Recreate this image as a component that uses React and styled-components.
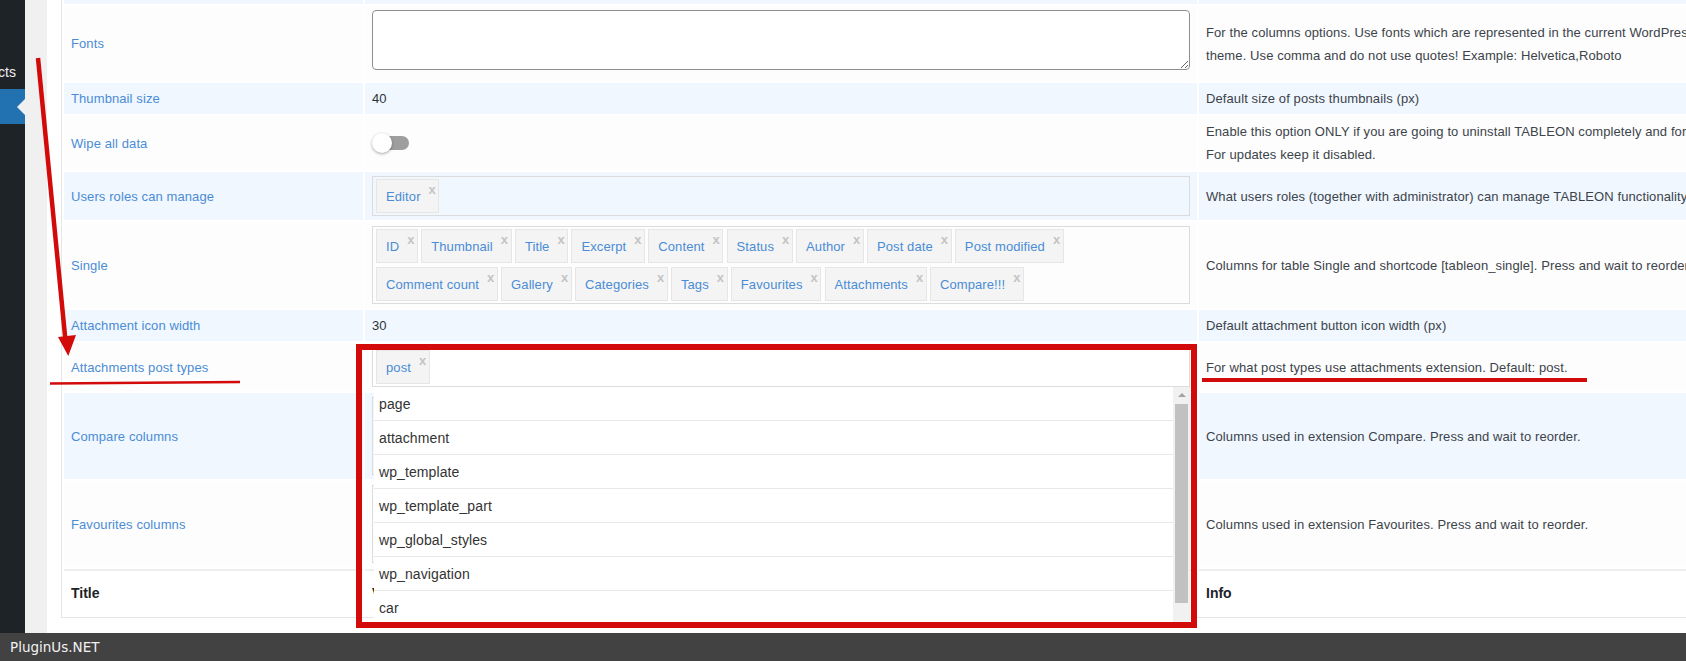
import React from 'react';
import styled, { createGlobalStyle } from 'styled-components';

const GlobalStyle = createGlobalStyle`
  html, body { margin: 0; padding: 0; background: #fff; overflow: hidden; }
  body { font-family: "Liberation Sans", Arial, Helvetica, sans-serif; }
  * { box-sizing: border-box; }
`;

const Page = styled.div`
  position: relative;
  width: 1686px;
  height: 661px;
  display: flex;
  flex-direction: column;
  overflow: hidden;
`;

const Workspace = styled.div`
  display: flex;
  flex: 1;
  min-height: 0;
`;

const AdminMenu = styled.nav`
  width: 25px;
  flex: none;
  background: #1d2327;
  display: flex;
  flex-direction: column;
  padding-top: 55px;
  overflow: hidden;
`;

const MenuItem = styled.div`
  position: relative;
  height: ${p => (p.$current ? 35 : 34)}px;
  flex: none;
  display: flex;
  align-items: center;
  justify-content: flex-end;
  padding-right: 9px;
  white-space: nowrap;
  font-size: 14px;
  color: #f0f0f1;
  background: ${p => (p.$current ? '#2271b1' : 'transparent')};
  &::after {
    content: '';
    display: ${p => (p.$current ? 'block' : 'none')};
    position: absolute;
    right: 0;
    top: 50%;
    margin-top: -8px;
    border: 8px solid transparent;
    border-right-color: #f0f0f1;
    border-left-width: 0;
  }
`;

const Gutter = styled.div`
  width: 22px;
  flex: none;
  background: #f0f0f1;
`;

const Content = styled.main`
  flex: 1;
  min-width: 0;
  background: #fff;
  padding-left: 14px;
  overflow: hidden;
`;

const SettingsTable = styled.table`
  table-layout: fixed;
  width: 1677px;
  border-collapse: separate;
  border-spacing: 2px;
  border: 1px solid #e6e6e6;
  border-top: none;
  margin-top: -2px;
`;

const Row = styled.tr`
  background: ${p => (p.$alt ? '#f0f7ff' : '#fdfdfd')};
`;

const BaseCell = styled.td`
  height: ${p => p.$h}px;
  padding: 0 7px;
  vertical-align: middle;
  font-size: 13px;
  letter-spacing: 0.1px;
`;

const LabelCell = styled(BaseCell)`
  color: #4a8cd6;
`;

const ValueCell = styled(BaseCell)`
  color: #2c3338;
`;

const InfoCell = styled(BaseCell)`
  color: #3c434a;
  line-height: 23px;
`;

const HeadCell = styled.th`
  height: 46px;
  padding: 0 7px;
  text-align: left;
  vertical-align: middle;
  font-size: 14px;
  font-weight: bold;
  color: #1d2327;
  background: #fff;
  border-top: 2px solid #eeeeee;
`;

const FontsInput = styled.textarea`
  display: block;
  width: 818px;
  height: 60px;
  margin: 0 0 7px 0;
  border: 1px solid #8c8f94;
  border-radius: 4px;
  background: #fff;
  font-family: inherit;
  resize: vertical;
`;

const Switch = styled.span`
  position: relative;
  display: block;
  width: 37px;
  height: 20px;
`;

const SwitchTrack = styled.span`
  position: absolute;
  left: 3px;
  top: 3px;
  width: 34px;
  height: 14px;
  border-radius: 7px;
  background: #9e9e9e;
`;

const SwitchKnob = styled.span`
  position: absolute;
  left: 0;
  top: 0;
  width: 20px;
  height: 20px;
  border-radius: 50%;
  background: #fff;
  box-shadow: 0 1px 3px rgba(0, 0, 0, 0.35);
`;

const TokenBox = styled.div`
  position: relative;
  display: flex;
  flex-wrap: wrap;
  align-content: flex-start;
  gap: 4px 3.3px;
  min-height: ${p => (p.$tall ? 78 : 40)}px;
  padding: 2px 2px 2px 3px;
  border: 1px solid #dcdcdc;
  background: ${p => p.$bg || 'transparent'};
`;

const Chip = styled.span`
  display: inline-flex;
  align-items: center;
  height: 34px;
  padding: 0 2.5px 0 9px;
  border: 1px solid #e6e6e6;
  background: #f4f4f4;
  color: #4a8cd6;
  font-size: 13px;
  letter-spacing: 0.1px;
  white-space: nowrap;
`;

const ChipRemove = styled.span`
  align-self: flex-start;
  margin: 3px 0 0 8px;
  font-size: 13px;
  font-weight: bold;
  line-height: 13px;
  letter-spacing: 0;
  color: #c4c4c4;
`;

const Dropdown = styled.div`
  position: absolute;
  top: calc(100% + 1px);
  left: 1px;
  right: -1px;
  height: 240px;
  display: flex;
  background: #fff;
  z-index: 5;
  overflow: hidden;
`;

const OptionList = styled.ul`
  flex: 1;
  margin: 0;
  padding: 0;
  list-style: none;
`;

const Option = styled.li`
  height: 34px;
  display: flex;
  align-items: center;
  padding-left: 5px;
  border-bottom: 1px solid #e8e8e8;
  font-size: 14px;
  color: #333;
`;

const ScrollBar = styled.div`
  width: 17px;
  flex: none;
  background: #f1f1f1;
  display: flex;
  flex-direction: column;
  align-items: center;
`;

const ScrollArrow = styled.span`
  width: 0;
  height: 0;
  margin-top: 6px;
  border-left: 4px solid transparent;
  border-right: 4px solid transparent;
  border-bottom: 4px solid #a3a3a3;
`;

const ScrollThumb = styled.span`
  width: 13px;
  height: 199px;
  margin-top: 7px;
  background: #c1c1c1;
`;

const Footer = styled.footer`
  height: 28px;
  flex: none;
  display: flex;
  align-items: center;
  padding-left: 10px;
  background: #424242;
  color: #f2f2f2;
  font-family: "DejaVu Sans", "Liberation Sans", sans-serif;
  font-size: 13.5px;
`;

const Annotations = styled.svg`
  position: absolute;
  left: 0;
  top: 0;
  pointer-events: none;
  z-index: 10;
`;

const singleColumns = [
  'ID', 'Thumbnail', 'Title', 'Excerpt', 'Content', 'Status', 'Author', 'Post date',
  'Post modified', 'Comment count', 'Gallery', 'Categories', 'Tags', 'Favourites',
  'Attachments', 'Compare!!!',
];

const postTypes = [
  'page', 'attachment', 'wp_template', 'wp_template_part', 'wp_global_styles',
  'wp_navigation', 'car',
];

function Tokens({ items, bg, tall, children }) {
  return (
    <TokenBox $bg={bg} $tall={tall}>
      {items.map(t => (
        <Chip key={t}>
          {t}
          <ChipRemove>x</ChipRemove>
        </Chip>
      ))}
      {children}
    </TokenBox>
  );
}

export default function App() {
  return (
    <Page>
      <GlobalStyle />
      <Workspace>
        <AdminMenu>
          <MenuItem>Products</MenuItem>
          <MenuItem $current />
        </AdminMenu>
        <Gutter />
        <Content>
          <SettingsTable>
            <colgroup>
              <col style={{ width: 299 }} />
              <col style={{ width: 832 }} />
              <col style={{ width: 536 }} />
            </colgroup>
            <tbody>
              <Row $alt>
                <LabelCell $h={4} />
                <ValueCell $h={4} />
                <InfoCell $h={4} />
              </Row>
              <Row>
                <LabelCell $h={75}>Fonts</LabelCell>
                <ValueCell $h={75}>
                  <FontsInput />
                </ValueCell>
                <InfoCell $h={75}>
                  For the columns options. Use fonts which are represented in the current WordPress theme. Use comma and do not use quotes! Example: Helvetica,Roboto
                </InfoCell>
              </Row>
              <Row $alt>
                <LabelCell $h={31}>Thumbnail size</LabelCell>
                <ValueCell $h={31}>40</ValueCell>
                <InfoCell $h={31}>Default size of posts thumbnails (px)</InfoCell>
              </Row>
              <Row>
                <LabelCell $h={54}>Wipe all data</LabelCell>
                <ValueCell $h={54}>
                  <Switch>
                    <SwitchTrack />
                    <SwitchKnob />
                  </Switch>
                </ValueCell>
                <InfoCell $h={54}>
                  Enable this option ONLY if you are going to uninstall TABLEON completely and forever. For updates keep it disabled.
                </InfoCell>
              </Row>
              <Row $alt>
                <LabelCell $h={48}>Users roles can manage</LabelCell>
                <ValueCell $h={48}>
                  <Tokens items={['Editor']} />
                </ValueCell>
                <InfoCell $h={48}>
                  What users roles (together with administrator) can manage TABLEON functionality.
                </InfoCell>
              </Row>
              <Row>
                <LabelCell $h={86}>Single</LabelCell>
                <ValueCell $h={86}>
                  <Tokens items={singleColumns} />
                </ValueCell>
                <InfoCell $h={86}>
                  Columns for table Single and shortcode [tableon_single]. Press and wait to reorder.
                </InfoCell>
              </Row>
              <Row $alt>
                <LabelCell $h={31}>Attachment icon width</LabelCell>
                <ValueCell $h={31}>30</ValueCell>
                <InfoCell $h={31}>Default attachment button icon width (px)</InfoCell>
              </Row>
              <Row>
                <LabelCell $h={48}>Attachments post types</LabelCell>
                <ValueCell $h={48}>
                  <Tokens items={['post']} bg="#fff">
                    <Dropdown>
                      <OptionList>
                        {postTypes.map(p => (
                          <Option key={p}>{p}</Option>
                        ))}
                      </OptionList>
                      <ScrollBar>
                        <ScrollArrow />
                        <ScrollThumb />
                      </ScrollBar>
                    </Dropdown>
                  </Tokens>
                </ValueCell>
                <InfoCell $h={48}>For what post types use attachments extension. Default: post.</InfoCell>
              </Row>
              <Row $alt>
                <LabelCell $h={86}>Compare columns</LabelCell>
                <ValueCell $h={86}>
                  <Tokens items={[]} tall />
                </ValueCell>
                <InfoCell $h={86}>Columns used in extension Compare. Press and wait to reorder.</InfoCell>
              </Row>
              <Row>
                <LabelCell $h={86}>Favourites columns</LabelCell>
                <ValueCell $h={86}>
                  <Tokens items={[]} tall />
                </ValueCell>
                <InfoCell $h={86}>Columns used in extension Favourites. Press and wait to reorder.</InfoCell>
              </Row>
            </tbody>
            <tfoot>
              <tr>
                <HeadCell>Title</HeadCell>
                <HeadCell>Value</HeadCell>
                <HeadCell>Info</HeadCell>
              </tr>
            </tfoot>
          </SettingsTable>
        </Content>
      </Workspace>
      <Footer>PluginUs.NET</Footer>
      <Annotations width="1686" height="661" viewBox="0 0 1686 661">
        <line x1="38" y1="58" x2="65.6" y2="342" stroke="#d20a0a" strokeWidth="4.5" />
        <polygon points="58,337 76,335 68.3,356" fill="#d20a0a" />
        <line x1="50" y1="383.5" x2="240" y2="382" stroke="#d20a0a" strokeWidth="2.5" />
        <rect x="359" y="347" width="835" height="278" fill="none" stroke="#d20a0a" strokeWidth="6" />
        <line x1="1202" y1="380" x2="1587" y2="380" stroke="#d20a0a" strokeWidth="4" />
      </Annotations>
    </Page>
  );
}
